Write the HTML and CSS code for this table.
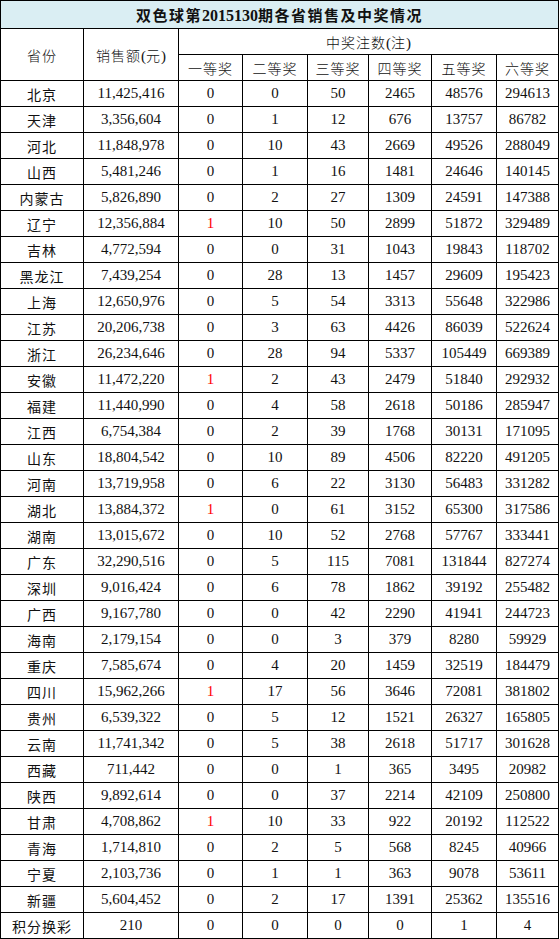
FILE: index.html
```html
<!DOCTYPE html>
<html lang="zh-CN">
<head>
<meta charset="utf-8">
<title>双色球第2015130期各省销售及中奖情况</title>
<link rel="stylesheet" href="styles.css">
</head>
<body>
<table class="sales">
<colgroup>
<col class="c-prov"><col class="c-amt"><col class="c1"><col class="c2"><col class="c3"><col class="c4"><col class="c5"><col class="c6">
</colgroup>
<thead>
<tr class="title-row"><th colspan="8" class="title">双色球第<span class="num">2015130</span>期各省销售及中奖情况</th></tr>
<tr class="head-row"><th rowspan="2" class="cn">省份</th><th rowspan="2" class="cn">销售额<span class="num">(</span>元<span class="num">)</span></th><th colspan="6" class="cn">中奖注数<span class="num">(</span>注<span class="num">)</span></th></tr>
<tr class="head-row"><th class="cn">一等奖</th><th class="cn">二等奖</th><th class="cn">三等奖</th><th class="cn">四等奖</th><th class="cn">五等奖</th><th class="cn">六等奖</th></tr>
</thead>
<tbody>
<tr><td class="cn">北京</td><td>11,425,416</td><td>0</td><td>0</td><td>50</td><td>2465</td><td>48576</td><td>294613</td></tr>
<tr><td class="cn">天津</td><td>3,356,604</td><td>0</td><td>1</td><td>12</td><td>676</td><td>13757</td><td>86782</td></tr>
<tr><td class="cn">河北</td><td>11,848,978</td><td>0</td><td>10</td><td>43</td><td>2669</td><td>49526</td><td>288049</td></tr>
<tr><td class="cn">山西</td><td>5,481,246</td><td>0</td><td>1</td><td>16</td><td>1481</td><td>24646</td><td>140145</td></tr>
<tr><td class="cn">内蒙古</td><td>5,826,890</td><td>0</td><td>2</td><td>27</td><td>1309</td><td>24591</td><td>147388</td></tr>
<tr><td class="cn">辽宁</td><td>12,356,884</td><td class="hit">1</td><td>10</td><td>50</td><td>2899</td><td>51872</td><td>329489</td></tr>
<tr><td class="cn">吉林</td><td>4,772,594</td><td>0</td><td>0</td><td>31</td><td>1043</td><td>19843</td><td>118702</td></tr>
<tr><td class="cn">黑龙江</td><td>7,439,254</td><td>0</td><td>28</td><td>13</td><td>1457</td><td>29609</td><td>195423</td></tr>
<tr><td class="cn">上海</td><td>12,650,976</td><td>0</td><td>5</td><td>54</td><td>3313</td><td>55648</td><td>322986</td></tr>
<tr><td class="cn">江苏</td><td>20,206,738</td><td>0</td><td>3</td><td>63</td><td>4426</td><td>86039</td><td>522624</td></tr>
<tr><td class="cn">浙江</td><td>26,234,646</td><td>0</td><td>28</td><td>94</td><td>5337</td><td>105449</td><td>669389</td></tr>
<tr><td class="cn">安徽</td><td>11,472,220</td><td class="hit">1</td><td>2</td><td>43</td><td>2479</td><td>51840</td><td>292932</td></tr>
<tr><td class="cn">福建</td><td>11,440,990</td><td>0</td><td>4</td><td>58</td><td>2618</td><td>50186</td><td>285947</td></tr>
<tr><td class="cn">江西</td><td>6,754,384</td><td>0</td><td>2</td><td>39</td><td>1768</td><td>30131</td><td>171095</td></tr>
<tr><td class="cn">山东</td><td>18,804,542</td><td>0</td><td>10</td><td>89</td><td>4506</td><td>82220</td><td>491205</td></tr>
<tr><td class="cn">河南</td><td>13,719,958</td><td>0</td><td>6</td><td>22</td><td>3130</td><td>56483</td><td>331282</td></tr>
<tr><td class="cn">湖北</td><td>13,884,372</td><td class="hit">1</td><td>0</td><td>61</td><td>3152</td><td>65300</td><td>317586</td></tr>
<tr><td class="cn">湖南</td><td>13,015,672</td><td>0</td><td>10</td><td>52</td><td>2768</td><td>57767</td><td>333441</td></tr>
<tr><td class="cn">广东</td><td>32,290,516</td><td>0</td><td>5</td><td>115</td><td>7081</td><td>131844</td><td>827274</td></tr>
<tr><td class="cn">深圳</td><td>9,016,424</td><td>0</td><td>6</td><td>78</td><td>1862</td><td>39192</td><td>255482</td></tr>
<tr><td class="cn">广西</td><td>9,167,780</td><td>0</td><td>0</td><td>42</td><td>2290</td><td>41941</td><td>244723</td></tr>
<tr><td class="cn">海南</td><td>2,179,154</td><td>0</td><td>0</td><td>3</td><td>379</td><td>8280</td><td>59929</td></tr>
<tr><td class="cn">重庆</td><td>7,585,674</td><td>0</td><td>4</td><td>20</td><td>1459</td><td>32519</td><td>184479</td></tr>
<tr><td class="cn">四川</td><td>15,962,266</td><td class="hit">1</td><td>17</td><td>56</td><td>3646</td><td>72081</td><td>381802</td></tr>
<tr><td class="cn">贵州</td><td>6,539,322</td><td>0</td><td>5</td><td>12</td><td>1521</td><td>26327</td><td>165805</td></tr>
<tr><td class="cn">云南</td><td>11,741,342</td><td>0</td><td>5</td><td>38</td><td>2618</td><td>51717</td><td>301628</td></tr>
<tr><td class="cn">西藏</td><td>711,442</td><td>0</td><td>0</td><td>1</td><td>365</td><td>3495</td><td>20982</td></tr>
<tr><td class="cn">陕西</td><td>9,892,614</td><td>0</td><td>0</td><td>37</td><td>2214</td><td>42109</td><td>250800</td></tr>
<tr><td class="cn">甘肃</td><td>4,708,862</td><td class="hit">1</td><td>10</td><td>33</td><td>922</td><td>20192</td><td>112522</td></tr>
<tr><td class="cn">青海</td><td>1,714,810</td><td>0</td><td>2</td><td>5</td><td>568</td><td>8245</td><td>40966</td></tr>
<tr><td class="cn">宁夏</td><td>2,103,736</td><td>0</td><td>1</td><td>1</td><td>363</td><td>9078</td><td>53611</td></tr>
<tr><td class="cn">新疆</td><td>5,604,452</td><td>0</td><td>2</td><td>17</td><td>1391</td><td>25362</td><td>135516</td></tr>
<tr><td class="cn">积分换彩</td><td>210</td><td>0</td><td>0</td><td>0</td><td>0</td><td>1</td><td>4</td></tr>
</tbody>
</table>
</body>
</html>
```

FILE: styles.css
```css
html, body {
  margin: 0;
  padding: 0;
  background: #ffffff;
}

.sales {
  border-collapse: collapse;
  table-layout: fixed;
  width: 558px;
  font-family: "Liberation Serif", "Noto Sans CJK SC", serif;
  font-size: 15px;
  color: #111111;
}

.c-prov { width: 83px; }
.c-amt { width: 95px; }
.c1 { width: 64px; }
.c2 { width: 65px; }
.c3 { width: 61px; }
.c4 { width: 63px; }
.c5 { width: 65px; }
.c6 { width: 62px; }

.sales th,
.sales td {
  border: 1px solid #000000;
  padding: 0;
  text-align: center;
  vertical-align: middle;
  font-weight: normal;
  white-space: nowrap;
  overflow: hidden;
}

.sales td {
  height: 25px;
}

.head-row th {
  height: 25px;
}

.title-row .title {
  height: 27px;
  background: #daeef3;
  font-family: "Noto Sans CJK SC", sans-serif;
  font-weight: bold;
  font-size: 15px;
  letter-spacing: 1.5px;
  color: #111111;
}

.title .num {
  font-family: "Liberation Serif", serif;
  font-size: 16px;
  letter-spacing: 0;
}

.cn {
  font-family: "Noto Sans CJK SC", sans-serif;
  font-size: 14px;
  letter-spacing: 1px;
  font-weight: 300;
}

.sales th.cn {
  font-weight: 300;
}

.cn .num {
  font-family: "Liberation Serif", serif;
  font-size: 15px;
  letter-spacing: 0;
}

.hit {
  color: #ff0000;
}
```
